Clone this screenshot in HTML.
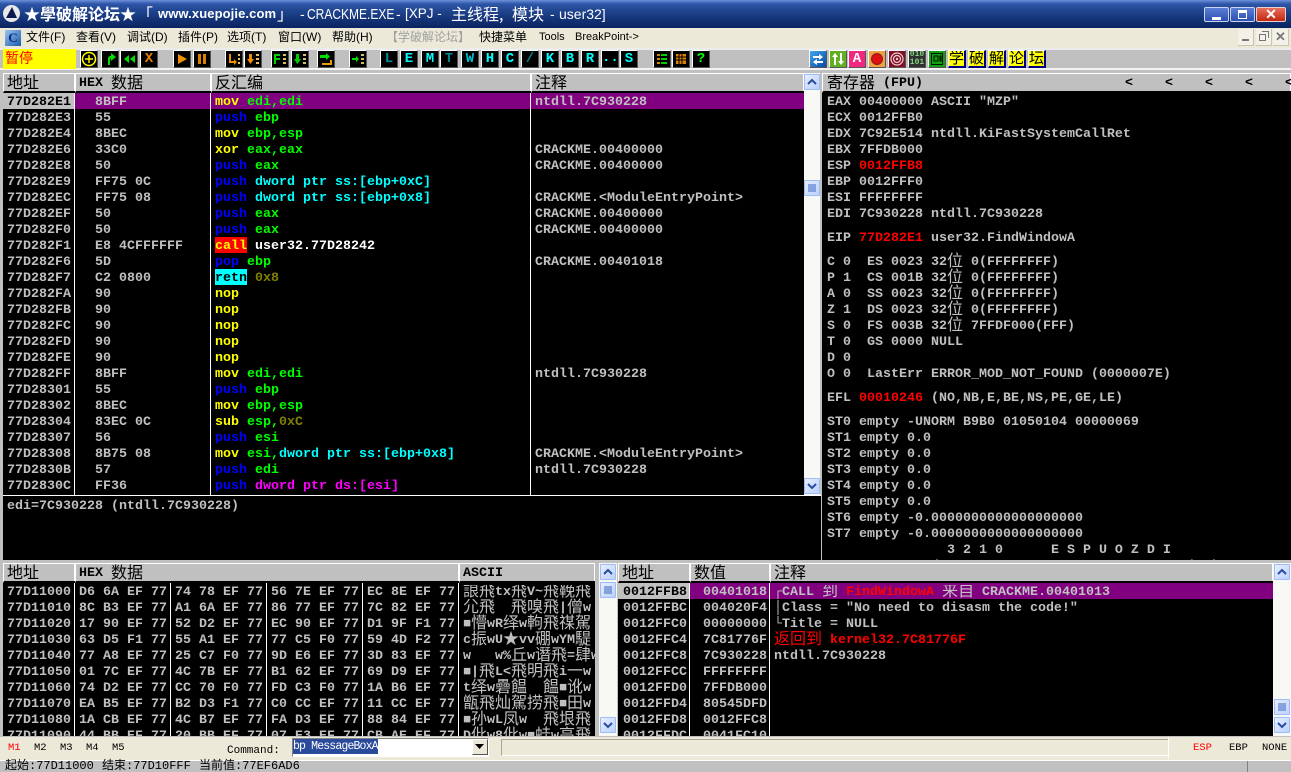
<!DOCTYPE html>
<html><head><meta charset="utf-8"><title>CRACKME</title>
<style>
html,body{margin:0;padding:0;width:1291px;height:772px;overflow:hidden;background:#c0c0c0}
#w{position:relative;width:1291px;height:772px;overflow:hidden;background:#c0c0c0;font:bold 13.333px/16px "Liberation Mono","WenQuanYi Zen Hei",monospace;color:#c0c0c0}
#w div,#w span.a{position:absolute}
i{font:normal 16px/16px "WenQuanYi Zen Hei","Noto Sans CJK SC",sans-serif;display:inline-block;height:16px;vertical-align:top;position:relative;top:-4px}
.col{white-space:pre;overflow:hidden;margin-top:2px}
.col span{display:inline}
.blk{background:#000;overflow:hidden}
.sep{background:#fff;width:1px}
.h{background:#c0c0c0;color:#000;border-top:1px solid #fff;border-left:1px solid #fff;border-bottom:2px solid #000;box-shadow:inset -1px 0 0 #fff;box-sizing:border-box;height:20px;white-space:pre;line-height:19px;padding-left:3px;overflow:hidden}
.h i{top:-1px}
.mn{top:29px;font:12px/17px "Liberation Sans","WenQuanYi Zen Hei",sans-serif;color:#000;white-space:pre}
.t{top:50px;width:18px;height:18px;background:#000;box-sizing:border-box;border:1px solid #fff;border-right-color:#555;border-bottom-color:#555;font:bold 14px/16px "Liberation Mono",monospace;text-align:center;color:#00ffff;overflow:hidden}
.t svg{position:absolute;left:0;top:0}
.y{background:#ffff00;color:#000;font:normal 15px/14px "WenQuanYi Zen Hei","Noto Sans CJK SC",sans-serif;border-right:2px solid #000080;border-bottom:2px solid #000080;border-left:1px solid #fff;border-top:1px solid #fff}
.sb{background:#f8f8f4}
.btn{width:16px;height:16px;box-sizing:border-box;border:1px solid #9ebdf6;background:linear-gradient(135deg,#e6efff,#bcd0fb);border-radius:1px}
.btn svg{position:absolute;left:2px;top:3px}
.m{color:#000;font:10.5px/12px "Liberation Mono",monospace;top:742px;white-space:pre}
.tt{color:#fff;top:4px;font:14px/20px 'Liberation Sans',sans-serif;white-space:pre}
.tc{color:#fff;top:3px;font:16px/20px 'WenQuanYi Zen Hei','Noto Sans CJK SC',sans-serif;white-space:pre}
.st{top:759px;color:#000;font:normal 12px/14px "Liberation Mono","WenQuanYi Zen Hei",monospace;white-space:pre}
.Y{color:#ffff00}.G{color:#00ff00}.B{color:#0000ff}.C{color:#00ffff}.R{color:#ff0000}.O{color:#808000}.W{color:#fff}.M{color:#ff00ff}
</style></head><body><div id="w">

<!-- title bar -->
<div style="left:0;top:0;width:1291px;height:28px;background:linear-gradient(#6d90dc 0,#2e56a8 14%,#1f448e 40%,#123072 75%,#0a2460 100%)"></div>
<div style="left:3px;top:5px;width:17px;height:17px;border-radius:9px;background:#e8e8e8;overflow:hidden"><svg width="17" height="17"><path d="M3 13L9 2l5 11z" fill="#0a1a50"/></svg></div>
<div class="tc" style="left:24px;font-weight:bold">★學破解论坛★</div>
<div class="tc" style="left:137px">「</div>
<div class="tt" style="left:158px;font-weight:bold;font-size:13px;letter-spacing:.1px">www.xuepojie.com</div>
<div class="tc" style="left:277px">」</div>
<div class="tt" style="left:300px">-</div>
<div class="tt" style="left:307px;font-size:12px;transform:scaleY(1.2)">CRACKME.EXE</div>
<div class="tt" style="left:396px">-</div>
<div class="tt" style="left:405px;font-size:13.500px">[XPJ -</div>
<div class="tc" style="left:451px">主线程,</div>
<div class="tc" style="left:512px">模块</div>
<div class="tt" style="left:550px">-</div>
<div class="tt" style="left:559px">user32]</div>
<div style="left:1204px;top:7px;width:25px;height:15px;background:linear-gradient(#5b7fd6,#2c4fb0);border:1px solid #c8d4f0;box-sizing:border-box;border-radius:2px"><div style="left:7px;top:9px;width:9px;height:3px;background:#fff"></div></div>
<div style="left:1230px;top:7px;width:25px;height:15px;background:linear-gradient(#5b7fd6,#2c4fb0);border:1px solid #c8d4f0;box-sizing:border-box;border-radius:2px"><div style="left:7px;top:2px;width:9px;height:9px;border:1px solid #fff;border-top:3px solid #fff;box-sizing:border-box"></div></div>
<div style="left:1256px;top:7px;width:30px;height:15px;background:linear-gradient(#e8705a,#c02810);border:1px solid #e8d0d0;box-sizing:border-box;border-radius:2px;color:#fff;font:bold 14px/13px 'Liberation Sans',sans-serif;text-align:center">✕</div>

<!-- menu bar -->
<div style="left:0;top:28px;width:1291px;height:20px;background:#ece9d8"></div>
<div style="left:5px;top:30px;width:16px;height:16px;background:linear-gradient(135deg,#9cc4f0,#1a5aa8);color:#0a2a80;font:bold 13px/16px 'Liberation Serif',serif;text-align:center">C</div>
<div class="mn" style="left:26px">文件(F)</div>
<div class="mn" style="left:76px">查看(V)</div>
<div class="mn" style="left:127px">调试(D)</div>
<div class="mn" style="left:178px">插件(P)</div>
<div class="mn" style="left:227px">选项(T)</div>
<div class="mn" style="left:278px">窗口(W)</div>
<div class="mn" style="left:332px">帮助(H)</div>
<div class="mn" style="left:386px;color:#a0a0a0">【学破解论坛】</div>
<div class="mn" style="left:479px">快捷菜单</div>
<div class="mn" style="left:539px;font-size:11px">Tools</div>
<div class="mn" style="left:575px;font-size:11px">BreakPoint-&gt;</div>
<div style="left:1238px;top:29px;width:16px;height:17px;background:#f4f2e8;border-right:1px solid #c8c4b0;border-bottom:1px solid #c8c4b0;box-sizing:border-box"><div style="left:4px;top:10px;width:7px;height:2px;background:#777"></div></div>
<div style="left:1256px;top:29px;width:16px;height:17px;background:#f4f2e8;border-right:1px solid #c8c4b0;border-bottom:1px solid #c8c4b0;box-sizing:border-box"><div style="left:3px;top:5px;width:7px;height:7px;border:1px solid #777;box-sizing:border-box"></div><div style="left:6px;top:2px;width:7px;height:7px;border:1px solid #777;border-left:0;border-bottom:0;box-sizing:border-box"></div></div>
<div style="left:1273px;top:29px;width:16px;height:17px;background:#f4f2e8;border-right:1px solid #c8c4b0;border-bottom:1px solid #c8c4b0;box-sizing:border-box;color:#777;font:bold 13px/15px 'Liberation Sans',sans-serif;text-align:center">✕</div>

<!-- toolbar -->
<div style="left:0;top:48px;width:1291px;height:2px;background:#fff;opacity:.7"></div>
<div style="left:0;top:68px;width:1291px;height:2px;background:#fff;opacity:.8"></div>
<div style="left:3px;top:49px;width:73px;height:20px;background:#ffff00;color:#ff0000;font:normal 14px/18px 'WenQuanYi Zen Hei','Noto Sans CJK SC',sans-serif;padding-left:2px;box-sizing:border-box">暂停</div>

<div class="t" style="left:80px"><svg width="16" height="16"><circle cx="8" cy="8" r="6.5" fill="none" stroke="#ff0" stroke-width="1.5"/><path d="M4 8h8M8 4v8" stroke="#ff0" stroke-width="1.4"/></svg></div>
<div class="t" style="left:101px"><svg width="16" height="16"><path d="M6 14V8c0-2 1-3 3-3V2l5 4-5 4V7.500c-1 0-1 .5-1 1.500v5z" fill="#00e000"/></svg></div>
<div class="t" style="left:120px"><svg width="16" height="16"><path d="M8 4v8L3 8zM14 4v8L9 8z" fill="#00e000"/></svg></div>
<div class="t" style="left:140px;color:#f08000">X</div>
<div class="t" style="left:173px"><svg width="16" height="16"><path d="M4 3l9 5-9 5z" fill="#f09000"/></svg></div>
<div class="t" style="left:193px"><svg width="16" height="16"><path d="M4 3h3v10H4zM9 3h3v10H9z" fill="#d88000"/></svg></div>
<div class="t" style="left:225px"><svg width="16" height="16"><path d="M3 3h2v7h3V8l3 3-3 3v-2H3z" fill="#f09000"/><path d="M12 3h2v2h-2zM12 7h2v2h-2zM12 11h2v2h-2z" fill="#e8c060"/></svg></div>
<div class="t" style="left:244px"><svg width="16" height="16"><path d="M4 3h3v5h2l-3.500 5L2 8h2z" fill="#f09000"/><path d="M11 3h3v2h-3zM11 7h3v2h-3zM11 11h3v2h-3z" fill="#e8c060"/></svg></div>
<div class="t" style="left:271px"><svg width="16" height="16"><path d="M2 3h6v2H4v2h4v2H4v4H2z" fill="#00d000"/><path d="M11 3h3v2h-3zM11 7h3v2h-3zM11 11h3v2h-3z" fill="#d8c060"/></svg></div>
<div class="t" style="left:291px"><svg width="16" height="16"><path d="M4 3h3v5h2l-3.500 5L2 8h2z" fill="#00d000"/><path d="M11 3h3v2h-3zM11 7h3v2h-3zM11 11h3v2h-3z" fill="#d8c060"/></svg></div>
<div class="t" style="left:317px"><svg width="16" height="16"><path d="M2 4h6V2l4 3.500L8 9V7H2z" fill="#00e000"/><path d="M12 9h2v5H4v-2h8z" fill="#e8a000"/></svg></div>
<div class="t" style="left:349px"><svg width="16" height="16"><path d="M2 7h4V5l3 3-3 3V9H2z" fill="#00e000"/><path d="M11 3h3v2h-3zM11 7h3v2h-3zM11 11h3v2h-3z" fill="#d8c060"/></svg></div>
<div class="t" style="left:380px;color:#0090a0">L</div>
<div class="t" style="left:400px">E</div>
<div class="t" style="left:421px">M</div>
<div class="t" style="left:440px;color:#008890">T</div>
<div class="t" style="left:461px;color:#00c0d0">W</div>
<div class="t" style="left:481px">H</div>
<div class="t" style="left:501px">C</div>
<div class="t" style="left:521px;color:#008890">/</div>
<div class="t" style="left:541px">K</div>
<div class="t" style="left:561px">B</div>
<div class="t" style="left:581px">R</div>
<div class="t" style="left:601px;line-height:14px">...</div>
<div class="t" style="left:620px">S</div>
<div class="t" style="left:653px"><svg width="16" height="16"><path d="M3 3h3v2H3zM3 7h3v2H3zM3 11h3v2H3z" fill="#e08000"/><path d="M7 3h6v2H7zM7 7h6v2H7zM7 11h6v2H7z" fill="#00d000"/></svg></div>
<div class="t" style="left:672px"><svg width="16" height="16"><path d="M3 3h10v10H3z" fill="#e08000"/><path d="M3 6h10M3 9h10M6 3v10M9 3v10" stroke="#000"/></svg></div>
<div class="t" style="left:692px;color:#00ff00">?</div>

<div class="t" style="left:809px;background:linear-gradient(135deg,#40a8f0,#0848a0)"><svg width="16" height="16"><path d="M3 5h6V3l4 3-4 3V7H3zM13 10H7V8l-4 3 4 3v-2h6z" fill="#fff"/></svg></div>
<div class="t" style="left:829px;background:#60b020"><svg width="16" height="16"><path d="M5 2l3 4H6v8H4V6H2zM11 14l3-4h-2V2h-2v8H8z" fill="#fff"/></svg></div>
<div class="t" style="left:848px;background:#f02880;color:#fff">A</div>
<div class="t" style="left:868px;background:#f0a040"><svg width="16" height="16"><circle cx="8" cy="8" r="5.500" fill="#e01010" stroke="#802020"/></svg></div>
<div class="t" style="left:888px;background:#801028"><svg width="16" height="16"><circle cx="8" cy="8" r="6" fill="none" stroke="#f0d0d0" stroke-width="1.200"/><circle cx="8" cy="8" r="3.500" fill="none" stroke="#f0d0d0" stroke-width="1.200"/><circle cx="8" cy="8" r="1.200" fill="#f0d0d0"/></svg></div>
<div class="t" style="left:908px;background:#303030;color:#80d080;font:bold 8px/8px 'Liberation Mono',monospace;letter-spacing:0">010<br>101</div>
<div class="t" style="left:928px;background:#10a010"><svg width="16" height="16"><path d="M2.500 2.500h11v11h-11zM5 5h4v5H5zM11 5h1v5h-1z" fill="none" stroke="#001000"/></svg></div>
<div class="t y" style="left:948px">学</div>
<div class="t y" style="left:968px">破</div>
<div class="t y" style="left:988px">解</div>
<div class="t y" style="left:1008px">论</div>
<div class="t y" style="left:1028px">坛</div>

<!-- disassembly headers -->
<div class="h" style="left:3px;top:73px;width:72px"><i>地址</i></div>
<div class="h" style="left:75px;top:73px;width:136px">HEX <i>数据</i></div>
<div class="h" style="left:211px;top:73px;width:320px"><i>反汇编</i></div>
<div class="h" style="left:531px;top:73px;width:273px"><i>注释</i></div>

<!-- disassembly -->
<div class="blk" style="left:3px;top:93px;width:801px;height:402px"></div>
<div style="left:3px;top:93px;width:72px;height:16px;background:#c0c0c0"></div>
<div style="left:75px;top:93px;width:729px;height:16px;background:#800080"></div>
<div style="left:215px;top:237px;width:32px;height:16px;background:#ff0000"></div>
<div style="left:215px;top:269px;width:32px;height:16px;background:#00ffff"></div>
<div class="sep" style="left:74px;top:93px;height:402px"></div>
<div class="sep" style="left:210px;top:93px;height:402px"></div>
<div class="sep" style="left:530px;top:93px;height:402px"></div>
<div class="col" style="left:7px;top:93px;width:66px;height:400px"><span style="color:#000">77D282E1</span>
77D282E3
77D282E4
77D282E6
77D282E8
77D282E9
77D282EC
77D282EF
77D282F0
77D282F1
77D282F6
77D282F7
77D282FA
77D282FB
77D282FC
77D282FD
77D282FE
77D282FF
77D28301
77D28302
77D28304
77D28307
77D28308
77D2830B
77D2830C</div>
<div class="col" style="left:95px;top:93px;width:112px;height:400px">8BFF
55
8BEC
33C0
50
FF75 0C
FF75 08
50
50
E8 4CFFFFFF
5D
C2 0800
90
90
90
90
90
8BFF
55
8BEC
83EC 0C
56
8B75 08
57
FF36</div>
<div class="col" style="left:215px;top:93px;width:312px;height:400px"><span class="Y">mov</span> <span class="G">edi,edi</span>
<span class="B">push</span> <span class="G">ebp</span>
<span class="Y">mov</span> <span class="G">ebp,esp</span>
<span class="Y">xor</span> <span class="G">eax,eax</span>
<span class="B">push</span> <span class="G">eax</span>
<span class="B">push</span> <span class="C">dword ptr ss:[ebp+0xC]</span>
<span class="B">push</span> <span class="C">dword ptr ss:[ebp+0x8]</span>
<span class="B">push</span> <span class="G">eax</span>
<span class="B">push</span> <span class="G">eax</span>
<span class="Y">call</span> <span class="W">user32.77D28242</span>
<span class="B">pop</span> <span class="G">ebp</span>
<span style="color:#000">retn</span> <span class="O">0x8</span>
<span class="Y">nop</span>
<span class="Y">nop</span>
<span class="Y">nop</span>
<span class="Y">nop</span>
<span class="Y">nop</span>
<span class="Y">mov</span> <span class="G">edi,edi</span>
<span class="B">push</span> <span class="G">ebp</span>
<span class="Y">mov</span> <span class="G">ebp,esp</span>
<span class="Y">sub</span> <span class="G">esp,</span><span class="O">0xC</span>
<span class="B">push</span> <span class="G">esi</span>
<span class="Y">mov</span> <span class="G">esi,</span><span class="C">dword ptr ss:[ebp+0x8]</span>
<span class="B">push</span> <span class="G">edi</span>
<span class="B">push</span> <span class="M">dword ptr ds:[esi]</span></div>
<div class="col" style="left:535px;top:93px;width:268px;height:400px">ntdll.7C930228


CRACKME.00400000
CRACKME.00400000

CRACKME.&lt;ModuleEntryPoint&gt;
CRACKME.00400000
CRACKME.00400000

CRACKME.00401018






ntdll.7C930228




CRACKME.&lt;ModuleEntryPoint&gt;
ntdll.7C930228
</div>

<!-- disasm scrollbar -->
<div class="sb" style="left:804px;top:73px;width:16px;height:422px"></div>
<div class="btn" style="left:804px;top:74px"><svg width="10" height="8"><path d="M1 6l4-4 4 4" fill="none" stroke="#2a4ca0" stroke-width="2"/></svg></div>
<div class="btn" style="left:804px;top:180px"><svg width="10" height="9"><path d="M1 1h8M1 3h8M1 5h8M1 7h8" stroke="#3a64c0"/></svg></div>
<div class="btn" style="left:804px;top:478px"><svg width="10" height="8"><path d="M1 2l4 4 4-4" fill="none" stroke="#2a4ca0" stroke-width="2"/></svg></div>

<!-- info pane -->
<div style="left:3px;top:495px;width:818px;height:1px;background:#fff"></div>
<div class="blk" style="left:3px;top:496px;width:818px;height:64px"></div>
<div class="col" style="left:7px;top:497px;width:400px;height:16px">edi=7C930228 (ntdll.7C930228)</div>

<!-- registers -->
<div class="h" style="left:822px;top:73px;width:469px;padding:0"><span class="a" style="left:4px;top:0"><i>寄存器</i> (FPU)</span><span class="a" style="left:302px;top:0">&lt;</span><span class="a" style="left:342px;top:0">&lt;</span><span class="a" style="left:382px;top:0">&lt;</span><span class="a" style="left:422px;top:0">&lt;</span><span class="a" style="left:462px;top:0">&lt;</span></div>
<div class="blk" style="left:822px;top:93px;width:469px;height:467px"></div>
<div class="col" style="left:827px;top:93px;width:464px;height:465px">EAX 00400000 ASCII "MZP"
ECX 0012FFB0
EDX 7C92E514 ntdll.KiFastSystemCallRet
EBX 7FFDB000
ESP <span class="R">0012FFB8</span>
EBP 0012FFF0
ESI FFFFFFFF
EDI 7C930228 ntdll.7C930228
<span style="display:block;height:8px"></span>EIP <span class="R">77D282E1</span> user32.FindWindowA
<span style="display:block;height:8px"></span>C 0  ES 0023 32<i>位</i> 0(FFFFFFFF)
P 1  CS 001B 32<i>位</i> 0(FFFFFFFF)
A 0  SS 0023 32<i>位</i> 0(FFFFFFFF)
Z 1  DS 0023 32<i>位</i> 0(FFFFFFFF)
S 0  FS 003B 32<i>位</i> 7FFDF000(FFF)
T 0  GS 0000 NULL
D 0
O 0  LastErr ERROR_MOD_NOT_FOUND (0000007E)
<span style="display:block;height:8px"></span>EFL <span class="R">00010246</span> (NO,NB,E,BE,NS,PE,GE,LE)
<span style="display:block;height:8px"></span>ST0 empty -UNORM B9B0 01050104 00000069
ST1 empty 0.0
ST2 empty 0.0
ST3 empty 0.0
ST4 empty 0.0
ST5 empty 0.0
ST6 empty -0.0000000000000000000
ST7 empty -0.0000000000000000000
               3 2 1 0      E S P U O Z D I
FST 4020  Cond 1 0 0 0  Err 0 0 1 0 0 0 0 0  (GT)</div>

<!-- dump -->
<div class="h" style="left:3px;top:563px;width:72px"><i>地址</i></div>
<div class="h" style="left:75px;top:563px;width:384px">HEX <i>数据</i></div>
<div class="h" style="left:459px;top:563px;width:136px">ASCII</div>
<div class="blk" style="left:3px;top:583px;width:592px;height:153px"></div>
<div class="sep" style="left:74px;top:583px;height:153px"></div>
<div class="sep" style="left:170px;top:583px;height:153px"></div>
<div class="sep" style="left:266px;top:583px;height:153px"></div>
<div class="sep" style="left:362px;top:583px;height:153px"></div>
<div class="sep" style="left:458px;top:583px;height:153px"></div>
<div class="col" style="left:7px;top:583px;width:66px;height:153px">77D11000
77D11010
77D11020
77D11030
77D11040
77D11050
77D11060
77D11070
77D11080
77D11090</div>
<div class="col" style="left:79px;top:583px;width:90px;height:153px">D6 6A EF 77
8C B3 EF 77
17 90 EF 77
63 D5 F1 77
77 A8 EF 77
01 7C EF 77
74 D2 EF 77
EA B5 EF 77
1A CB EF 77
44 BB EF 77</div>
<div class="col" style="left:175px;top:583px;width:90px;height:153px">74 78 EF 77
A1 6A EF 77
52 D2 EF 77
55 A1 EF 77
25 C7 F0 77
4C 7B EF 77
CC 70 F0 77
B2 D3 F1 77
4C B7 EF 77
20 BB EF 77</div>
<div class="col" style="left:271px;top:583px;width:90px;height:153px">56 7E EF 77
86 77 EF 77
EC 90 EF 77
77 C5 F0 77
9D E6 EF 77
B1 62 EF 77
FD C3 F0 77
C0 CC EF 77
FA D3 EF 77
07 E3 EF 77</div>
<div class="col" style="left:367px;top:583px;width:90px;height:153px">EC 8E EF 77
7C 82 EF 77
D1 9F F1 77
59 4D F2 77
3D 83 EF 77
69 D9 EF 77
1A B6 EF 77
11 CC EF 77
88 84 EF 77
CB AE EF 77</div>
<div class="col" style="left:463px;top:583px;width:132px;height:153px"><i>誏飛</i>tx<i>飛</i>V~<i>飛鞔飛</i>
<i>尣飛</i>  <i>飛嗅飛</i>|<i>僧</i>w
■<i>懵</i>wR<i>绎</i>w<i>軥飛禖駕</i>
c<i>振</i>wU<i>★</i>vv<i>硼</i>wYM<i>騠</i>
w   w%<i>丘</i>w<i>谮飛</i>=<i>肆</i>w
■|<i>飛</i>L&lt;<i>飛明飛</i>i<i>一</i>w
t<i>绎</i>w<i>礨饂</i>  <i>饂</i>■<i>讹</i>w
<i>甑飛灿駕捞飛</i>■<i>田</i>w
■<i>孙</i>wL<i>凤</i>w  <i>飛垠飛</i>
D<i>仳</i>w8<i>仳</i>w■<i>蛙</i>w<i>高飛</i></div>
<div class="sb" style="left:599px;top:563px;width:18px;height:173px"></div>
<div class="btn" style="left:600px;top:564px"><svg width="10" height="8"><path d="M1 6l4-4 4 4" fill="none" stroke="#2a4ca0" stroke-width="2"/></svg></div>
<div class="btn" style="left:600px;top:582px"><svg width="10" height="9"><path d="M1 1h8M1 3h8M1 5h8M1 7h8" stroke="#3a64c0"/></svg></div>
<div class="btn" style="left:600px;top:717px"><svg width="10" height="8"><path d="M1 2l4 4 4-4" fill="none" stroke="#2a4ca0" stroke-width="2"/></svg></div>

<!-- stack -->
<div class="h" style="left:618px;top:563px;width:72px"><i>地址</i></div>
<div class="h" style="left:690px;top:563px;width:80px"><i>数值</i></div>
<div class="h" style="left:770px;top:563px;width:503px"><i>注释</i></div>
<div class="blk" style="left:618px;top:583px;width:655px;height:153px"></div>
<div style="left:618px;top:583px;width:72px;height:16px;background:#c0c0c0"></div>
<div style="left:690px;top:583px;width:583px;height:16px;background:#800080"></div>
<div class="sep" style="left:689px;top:583px;height:153px"></div>
<div class="sep" style="left:769px;top:583px;height:153px"></div>
<div class="col" style="left:623px;top:583px;width:66px;height:153px"><span style="color:#000">0012FFB8</span>
0012FFBC
0012FFC0
0012FFC4
0012FFC8
0012FFCC
0012FFD0
0012FFD4
0012FFD8
0012FFDC</div>
<div class="col" style="left:703px;top:583px;width:66px;height:153px">00401018
004020F4
00000000
7C81776F
7C930228
FFFFFFFF
7FFDB000
80545DFD
0012FFC8
0041FC10</div>
<div class="col" style="left:774px;top:583px;width:498px;height:153px">┌CALL <i>到</i> <span class="R">FindWindowA</span> <i>来自</i> CRACKME.00401013
│Class = "No need to disasm the code!"
└Title = NULL
<span class="R"><i>返回到</i> kernel32.7C81776F</span>
ntdll.7C930228</div>
<div class="sb" style="left:1273px;top:563px;width:18px;height:173px"></div>
<div class="btn" style="left:1274px;top:564px"><svg width="10" height="8"><path d="M1 6l4-4 4 4" fill="none" stroke="#2a4ca0" stroke-width="2"/></svg></div>
<div class="btn" style="left:1274px;top:699px"><svg width="10" height="9"><path d="M1 1h8M1 3h8M1 5h8M1 7h8" stroke="#3a64c0"/></svg></div>
<div class="btn" style="left:1274px;top:717px"><svg width="10" height="8"><path d="M1 2l4 4 4-4" fill="none" stroke="#2a4ca0" stroke-width="2"/></svg></div>

<!-- command bar -->
<div style="left:0;top:736px;width:1291px;height:24px;background:#ece9d8;border-top:1px solid #c0c0c0;box-sizing:border-box"></div>
<div class="m" style="left:8px;color:#ff0000">M1</div>
<div class="m" style="left:34px">M2</div>
<div class="m" style="left:60px">M3</div>
<div class="m" style="left:86px">M4</div>
<div class="m" style="left:112px">M5</div>
<div class="m" style="left:227px;top:745px;font-size:11px">Command:</div>
<div style="left:292px;top:738px;width:197px;height:19px;background:#fff;border:1px solid #808080;border-right-color:#fff;border-bottom-color:#fff;box-sizing:border-box"></div>
<div style="left:293px;top:739px;width:85px;height:15px;background:#2a4a9c;color:#fff;font:normal 11.500px/15px 'Liberation Mono',monospace;white-space:pre;letter-spacing:-.85px;overflow:hidden">bp MessageBoxA</div>
<div style="left:472px;top:739px;width:16px;height:16px;background:#ece9d8;border:1px solid #fff;border-right-color:#555;border-bottom-color:#555;box-sizing:border-box"><svg style="position:absolute;left:2px;top:4px" width="10" height="6"><path d="M0 0h9L4.500 5z" fill="#000"/></svg></div>
<div style="left:501px;top:739px;width:668px;height:17px;border:1px solid #a8a698;border-right-color:#fff;border-bottom-color:#fff;box-sizing:border-box"></div>
<div style="left:1168px;top:737px;width:1px;height:22px;background:#fff"></div>
<div class="m" style="left:1193px;color:#ff0000">ESP</div>
<div class="m" style="left:1229px">EBP</div>
<div class="m" style="left:1262px">NONE</div>

<!-- status bar -->
<div style="left:0;top:760px;width:1291px;height:12px;background:#c0c0c0;border-top:1px solid #fff;box-sizing:border-box"></div>
<div style="left:1247px;top:761px;width:1px;height:11px;background:#808080"></div>
<div class="st" style="left:5px">起始:77D11000</div>
<div class="st" style="left:102px">结束:77D10FFF</div>
<div class="st" style="left:199px">当前值:77EF6AD6</div>

</div></body></html>
